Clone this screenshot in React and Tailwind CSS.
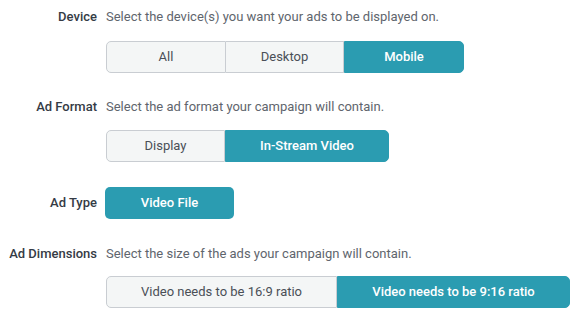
import React from 'react'

const font = { fontFamily: 'Roboto, "Liberation Sans", sans-serif' }

function Segmented({ options, active, widths }) {
  return (
    <div className="flex">
      {options.map((opt, i) => {
        const on = opt === active
        const first = i === 0
        const last = i === options.length - 1
        return (
          <div
            key={opt}
            style={{ width: widths[i] }}
            className={`h-[32px] flex items-center justify-center text-[13px] ${
              on
                ? 'bg-[#2b9cb1] text-white font-medium border border-[#2b9cb1]'
                : 'bg-[#f4f6f6] text-[#4a4f57] border border-[#c9cdd2]'
            } ${first ? 'rounded-l-[5px]' : ''} ${last ? 'rounded-r-[5px]' : ''} ${
              !first && !on ? 'border-l-0' : ''
            }`}
          >
            {opt}
          </div>
        )
      })}
    </div>
  )
}

function Row({ label, desc, children, className = '' }) {
  return (
    <div className={`flex ${className}`}>
      <div className="w-[97px] shrink-0 text-right text-[13px] font-medium text-[#353b45] leading-[20px]">
        {label}
      </div>
      <div className="pl-[9px] flex-1">
        {desc && <div className="text-[13px] text-[#60656d] leading-[20px]">{desc}</div>}
        {children}
      </div>
    </div>
  )
}

export default function App() {
  return (
    <div className="w-[585px] h-[320px] bg-white" style={font}>
      <div className="pt-[7px]">
        <Row label="Device" desc="Select the device(s) you want your ads to be displayed on.">
          <div className="mt-[14px]">
            <Segmented options={['All', 'Desktop', 'Mobile']} active="Mobile" widths={[120, 118, 120]} />
          </div>
        </Row>
        <Row label="Ad Format" desc="Select the ad format your campaign will contain." className="mt-[24px]">
          <div className="mt-[13px]">
            <Segmented options={['Display', 'In-Stream Video']} active="In-Stream Video" widths={[119, 164]} />
          </div>
        </Row>
        <div className="flex items-center mt-[25px]">
          <div className="w-[97px] shrink-0 text-right text-[13px] font-medium text-[#353b45]">Ad Type</div>
          <div className="pl-[8px]">
            <div className="w-[129px] h-[32px] rounded-[5px] bg-[#2b9cb1] text-white font-medium text-[13px] flex items-center justify-center">
              Video File
            </div>
          </div>
        </div>
        <Row label="Ad Dimensions" desc="Select the size of the ads your campaign will contain." className="mt-[25px]">
          <div className="mt-[12px]">
            <Segmented
              options={['Video needs to be 16:9 ratio', 'Video needs to be 9:16 ratio']}
              active="Video needs to be 9:16 ratio"
              widths={[231, 233]}
            />
          </div>
        </Row>
      </div>
    </div>
  )
}
